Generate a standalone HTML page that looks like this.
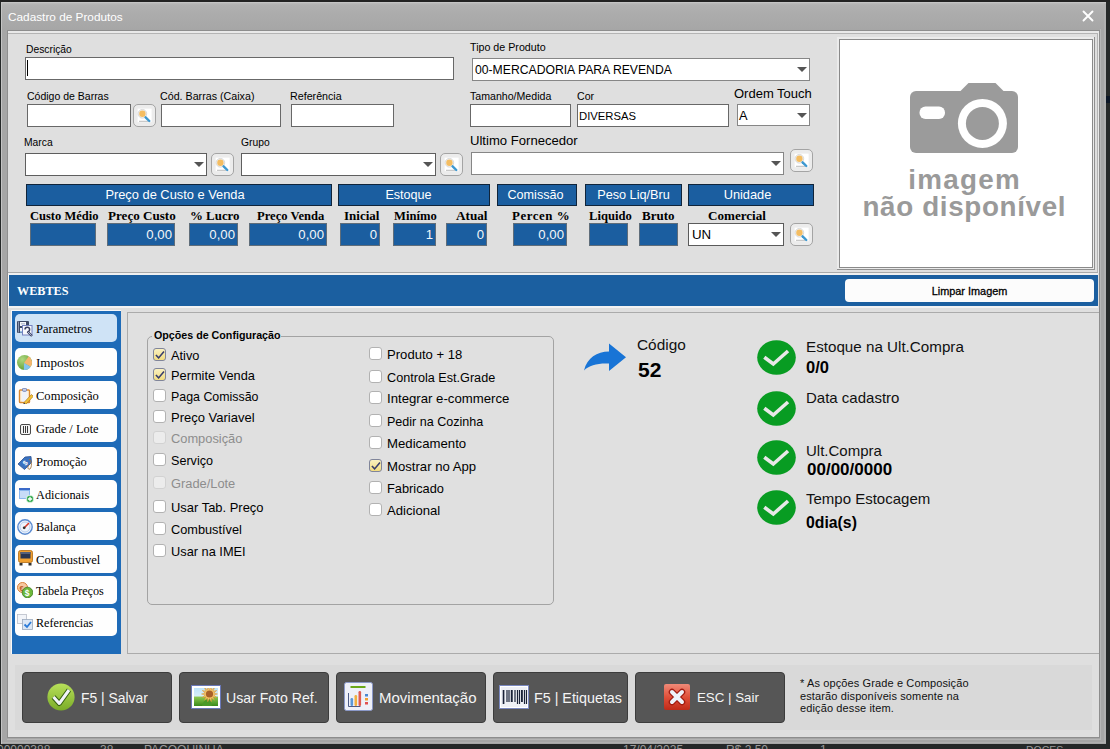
<!DOCTYPE html>
<html><head><meta charset="utf-8">
<style>
*{margin:0;padding:0;box-sizing:border-box}
html,body{width:1110px;height:749px;overflow:hidden;background:#252828;font-family:"Liberation Sans",sans-serif}
.a{position:absolute}
#win{position:absolute;left:1px;top:2px;width:1105px;height:742px;background:#a6a6a6;border-left:1px solid #c4c4c4;border-top:1px solid #c4c4c4}
#title{position:absolute;left:0;top:0;width:1104px;height:27px;background:linear-gradient(#bababa 0,#b1b1b1 2px,#acacac 40%,#a6a6a6 100%)}
#title span{position:absolute;left:6px;top:7px;font-size:11.8px;color:#fff;letter-spacing:0}
.lbl{position:absolute;font-size:11px;color:#000;white-space:nowrap;line-height:13px}
.inp{position:absolute;background:#fff;border:1px solid #686868}
.cmb{position:absolute;background:#fff;border:1px solid #868686}
.cmb:after{content:"";position:absolute;right:2px;top:50%;margin-top:-2.5px;border-left:5px solid transparent;border-right:5px solid transparent;border-top:5px solid #555}
.srch{position:absolute;width:23px;height:23px;border:1px solid #a4a4a4;border-radius:5px;background:#ececec}
.bar{position:absolute;height:22px;background:#1b5ea0;border:1px solid #10243a;color:#fff;font-size:13px;text-align:center;line-height:20px}
.bl{position:absolute;font-family:"Liberation Serif",serif;font-weight:bold;font-size:12.6px;white-space:nowrap;line-height:13px}
.bi{position:absolute;height:23px;background:#1b5ea0;border:1px solid #5f6d7a;color:#f4f6f8;font-size:13.2px;text-align:right;padding-right:2px;line-height:21px}

.cb{position:absolute;width:13px;height:13px;border:1px solid #b2b2b2;border-radius:3px;background:#fff}
.cb.ck{background:linear-gradient(#f9f0c0,#f2dc80);border-color:#80859a}

.cb.dis{background:#ececec;border-color:#d2d2d2}
.ct{position:absolute;font-size:12.6px;color:#000;white-space:nowrap;line-height:16px;margin-top:1px}
.ct.dt{color:#8d8d8d}
.sb{position:absolute;left:15px;width:102px;height:28px;background:#fefefe;border-radius:5px}
.sb.sel{background:#cfe3f6}
.sb span{position:absolute;left:21px;top:8px;font-family:"Liberation Serif",serif;font-size:12.6px;color:#000;white-space:nowrap;line-height:14px}
.ic{position:absolute;left:2px;top:6px;width:16px;height:16px}
.bbtn{position:absolute;top:672px;height:51px;background:#565656;border:1px solid #3c3c3c;border-radius:4px;color:#f4f4f4;white-space:nowrap}
.bbtn span{position:absolute;top:16px;font-size:14px;line-height:18px}
.st{position:absolute;font-size:15px;color:#111;white-space:nowrap;line-height:18px}
.sv{position:absolute;font-size:15px;font-weight:bold;color:#000;white-space:nowrap;line-height:18px}
</style></head><body>
<div id="win">
  <div id="title"><span>Cadastro de Produtos</span>
    <svg class="a" style="left:1080px;top:7px" width="12" height="12" viewBox="0 0 12 12"><path d="M1.5 1.5L10.5 10.5M10.5 1.5L1.5 10.5" stroke="#fff" stroke-width="1.9" stroke-linecap="round"/></svg>
  </div>
</div>
<div class="a" style="left:1106px;top:96px;width:4px;height:7px;background:#0c1626"></div>
<!-- frame stripes -->
<div class="a" style="left:1100px;top:29px;width:1px;height:710px;background:#b6b6b6"></div>
<div class="a" style="left:1104px;top:4px;width:2px;height:739px;background:#b0b0b0"></div>
<div class="a" style="left:7px;top:739px;width:1094px;height:1px;background:#b6b6b6"></div>
<div class="a" style="left:2px;top:742px;width:1104px;height:1px;background:#b0b0b0"></div>
<!-- content area -->
<div class="a" style="left:7px;top:30px;width:1093px;height:708px;background:#dfdfdf;border:1px solid #8e8e8e"></div><div class="a" style="left:1097px;top:33px;width:1px;height:240px;background:#b4b4b4"></div><div class="a" style="left:1098px;top:31px;width:1px;height:242px;background:#e9e9e9"></div>
<div class="a" style="left:8px;top:31px;width:1091px;height:2px;background:#e9e9e9"></div><div class="a" style="left:8px;top:33px;width:1090px;height:1px;background:#b4b4b4"></div><div class="a" style="left:0;top:0;width:1110px;height:2px;background:#222"></div>

<!-- row 1 -->
<div class="lbl" style="left:26px;top:43px;font-size:10.3px">Descrição</div>
<div class="inp" style="left:25px;top:57px;width:429px;height:23px"><div class="a" style="left:1px;top:2px;width:1px;height:16px;background:#000"></div></div>
<div class="lbl" style="left:470px;top:41px;font-size:10.7px">Tipo de Produto</div>
<div class="cmb" style="left:472px;top:58px;width:338px;height:23px"><span class="a" style="left:2px;top:4px;font-size:12.2px">00-MERCADORIA PARA REVENDA</span></div>

<!-- row 2 -->
<div class="lbl" style="left:27px;top:90px;font-size:10.5px">Código de Barras</div>
<div class="inp" style="left:27px;top:104px;width:104px;height:23px"></div>
<div class="srch" style="left:133px;top:104px"><svg class="a" style="left:0;top:0" width="21" height="21" viewBox="0 0 21 21"><rect x="3.6" y="3.6" width="14" height="13.6" fill="#fff"/><path d="M5 16.3H14.5" stroke="#b4b4b4" stroke-width="0.9"/><circle cx="8.4" cy="8.8" r="4.3" fill="#f3f3f3" stroke="#d8d8d8" stroke-width="1"/><circle cx="8.4" cy="8.8" r="3.2" fill="#f4bd62"/><path d="M11.6 12.3L15.3 16" stroke="#3d98d0" stroke-width="2.4" stroke-linecap="round"/></svg></div>
<div class="lbl" style="left:160px;top:90px;font-size:10.7px">Cód. Barras (Caixa)</div>
<div class="inp" style="left:161px;top:104px;width:120px;height:23px"></div>
<div class="lbl" style="left:290px;top:90px;font-size:10.7px">Referência</div>
<div class="inp" style="left:291px;top:104px;width:103px;height:23px"></div>
<div class="lbl" style="left:470px;top:90px;font-size:10.6px">Tamanho/Medida</div>
<div class="inp" style="left:470px;top:104px;width:101px;height:23px"></div>
<div class="lbl" style="left:577px;top:90px;font-size:10.6px">Cor</div>
<div class="inp" style="left:577px;top:104px;width:152px;height:23px"><span class="a" style="left:1px;top:5px;font-size:11.3px">DIVERSAS</span></div>
<div class="lbl" style="left:734px;top:87px;font-size:13px">Ordem Touch</div>
<div class="cmb" style="left:737px;top:104px;width:73px;height:22px"><span class="a" style="left:1px;top:3px;font-size:12.8px">A</span></div>

<!-- row 3 -->
<div class="lbl" style="left:24px;top:136px;font-size:10.3px">Marca</div>
<div class="cmb" style="left:25px;top:153px;width:182px;height:23px;border-color:#5e5e5e"></div>
<div class="srch" style="left:211px;top:153px"><svg class="a" style="left:0;top:0" width="21" height="21" viewBox="0 0 21 21"><rect x="3.6" y="3.6" width="14" height="13.6" fill="#fff"/><path d="M5 16.3H14.5" stroke="#b4b4b4" stroke-width="0.9"/><circle cx="8.4" cy="8.8" r="4.3" fill="#f3f3f3" stroke="#d8d8d8" stroke-width="1"/><circle cx="8.4" cy="8.8" r="3.2" fill="#f4bd62"/><path d="M11.6 12.3L15.3 16" stroke="#3d98d0" stroke-width="2.4" stroke-linecap="round"/></svg></div>
<div class="lbl" style="left:241px;top:136px;font-size:10.3px">Grupo</div>
<div class="cmb" style="left:241px;top:153px;width:195px;height:23px;border-color:#5e5e5e"></div>
<div class="srch" style="left:440px;top:153px"><svg class="a" style="left:0;top:0" width="21" height="21" viewBox="0 0 21 21"><rect x="3.6" y="3.6" width="14" height="13.6" fill="#fff"/><path d="M5 16.3H14.5" stroke="#b4b4b4" stroke-width="0.9"/><circle cx="8.4" cy="8.8" r="4.3" fill="#f3f3f3" stroke="#d8d8d8" stroke-width="1"/><circle cx="8.4" cy="8.8" r="3.2" fill="#f4bd62"/><path d="M11.6 12.3L15.3 16" stroke="#3d98d0" stroke-width="2.4" stroke-linecap="round"/></svg></div>
<div class="lbl" style="left:470px;top:134px;font-size:13.1px">Ultimo Fornecedor</div>
<div class="cmb" style="left:471px;top:152px;width:313px;height:23px"></div>
<div class="srch" style="left:790px;top:149px"><svg class="a" style="left:0;top:0" width="21" height="21" viewBox="0 0 21 21"><rect x="3.6" y="3.6" width="14" height="13.6" fill="#fff"/><path d="M5 16.3H14.5" stroke="#b4b4b4" stroke-width="0.9"/><circle cx="8.4" cy="8.8" r="4.3" fill="#f3f3f3" stroke="#d8d8d8" stroke-width="1"/><circle cx="8.4" cy="8.8" r="3.2" fill="#f4bd62"/><path d="M11.6 12.3L15.3 16" stroke="#3d98d0" stroke-width="2.4" stroke-linecap="round"/></svg></div>

<!-- blue bars -->
<div class="bar" style="left:26px;top:184px;width:306px;padding-right:8px;font-size:12.85px">Preço de Custo e Venda</div>
<div class="bar" style="left:338px;top:184px;width:152px;padding-right:11px;font-size:12.6px">Estoque</div>
<div class="bar" style="left:497px;top:184px;width:80px;padding-right:3px;font-size:12.6px">Comissão</div>
<div class="bar" style="left:585px;top:184px;width:97px;font-size:12.7px">Peso Liq/Bru</div>
<div class="bar" style="left:688px;top:184px;width:126px;padding-right:7px;font-size:12.8px">Unidade</div>

<div class="bl" style="left:30px;top:210px;font-size:12.5px">Custo Médio</div>
<div class="bl" style="left:108px;top:209px;font-size:13.1px">Preço Custo</div>
<div class="bl" style="left:190px;top:210px;font-size:12.9px">% Lucro</div>
<div class="bl" style="left:257px;top:210px;font-size:12.6px">Preço Venda</div>
<div class="bl" style="left:344px;top:209px;font-size:13px">Inicial</div>
<div class="bl" style="left:394px;top:210px;font-size:12.6px">Minímo</div>
<div class="bl" style="left:456px;top:209px;font-size:13.2px">Atual</div>
<div class="bl" style="left:512px;top:210px;font-size:12.9px;letter-spacing:0.55px">Percen %</div>
<div class="bl" style="left:589px;top:210px;font-size:12.6px">Liquido</div>
<div class="bl" style="left:642px;top:209px;font-size:13px">Bruto</div>
<div class="bl" style="left:708px;top:209px;font-size:13.1px">Comercial</div>

<div class="bi" style="left:30px;top:223px;width:66px"></div>
<div class="bi" style="left:107px;top:223px;width:68px">0,00</div>
<div class="bi" style="left:189px;top:223px;width:49px">0,00</div>
<div class="bi" style="left:249px;top:223px;width:78px">0,00</div>
<div class="bi" style="left:340px;top:223px;width:40px">0</div>
<div class="bi" style="left:393px;top:223px;width:43px">1</div>
<div class="bi" style="left:446px;top:223px;width:41px">0</div>
<div class="bi" style="left:513px;top:223px;width:54px">0,00</div>
<div class="bi" style="left:589px;top:223px;width:39px"></div>
<div class="bi" style="left:639px;top:223px;width:39px"></div>
<div class="cmb" style="left:688px;top:223px;width:96px;height:23px;border-color:#5a5a5a"><span class="a" style="left:3px;top:3px;font-size:13.3px">UN</span></div>
<div class="srch" style="left:790px;top:223px"><svg class="a" style="left:0;top:0" width="21" height="21" viewBox="0 0 21 21"><rect x="3.6" y="3.6" width="14" height="13.6" fill="#fff"/><path d="M5 16.3H14.5" stroke="#b4b4b4" stroke-width="0.9"/><circle cx="8.4" cy="8.8" r="4.3" fill="#f3f3f3" stroke="#d8d8d8" stroke-width="1"/><circle cx="8.4" cy="8.8" r="3.2" fill="#f4bd62"/><path d="M11.6 12.3L15.3 16" stroke="#3d98d0" stroke-width="2.4" stroke-linecap="round"/></svg></div>

<!-- image box -->
<div class="a" style="left:837px;top:37px;width:258px;height:233px;background:#ebebeb;border-right:1px solid #909090;border-bottom:1px solid #909090"></div>
<div class="a" style="left:839px;top:39px;width:254px;height:229px;background:#fff;border:1px solid #8a8a8a"></div>


<!-- camera placeholder -->
<svg class="a" style="left:900px;top:80px" width="130" height="80" viewBox="900 80 130 80">
 <path d="M960 91.5 L968.5 83 L995.5 83 L1004 91.5 Z" fill="#9b9b9b"/>
 <rect x="910" y="91" width="108" height="62" rx="6" fill="#9b9b9b"/>
 <rect x="919.5" y="106.5" width="25.5" height="12.5" rx="6" fill="#fff"/>
 <circle cx="982.4" cy="123.4" r="24.5" fill="#fff"/>
 <circle cx="982.4" cy="123.4" r="16.5" fill="#9b9b9b"/>
</svg>
<div class="a" style="left:836px;top:167px;width:256px;text-align:center;font-weight:bold;font-size:27.8px;line-height:26.7px;color:#9a9a9a;letter-spacing:0"><span style="letter-spacing:1.3px;margin-right:-1.3px">imagem</span><br><span style="letter-spacing:0.65px;margin-right:-0.65px">não disponível</span></div>

<!-- separator line & blue bar -->
<div class="a" style="left:8px;top:272px;width:1090px;height:1px;background:#a9a9a9"></div>
<div class="a" style="left:8px;top:273px;width:1090px;height:2px;background:#f0f0f0"></div>
<div class="a" style="left:8px;top:275px;width:1090px;height:31px;background:#1b5fa0;border-left:1px solid #fafafa"></div>
<div class="a" style="left:17px;top:284px;font-family:'Liberation Serif',serif;font-weight:bold;font-size:12.2px;color:#fff;line-height:14px">WEBTES</div>
<div class="a" style="left:845px;top:279px;width:249px;height:23px;background:#fcfcfc;border-radius:4px;text-align:center;font-size:10.9px;line-height:25px;color:#000;-webkit-text-stroke:0.3px #000">Limpar Imagem</div>
<div class="a" style="left:8px;top:306px;width:1090px;height:2px;background:#f2f2f2"></div>

<!-- sidebar -->
<div class="a" style="left:11px;top:310px;width:110px;height:344px;background:#1e6bb8;border-left:1px solid #f8f8f8;border-top:1px solid #f8f8f8"></div>
<div class="sb sel" style="top:314px"><svg class="a" style="left:2px;top:7px" width="16" height="16" viewBox="0 0 16 16"><rect x="0" y="0" width="12" height="12" fill="#3e4a66" rx="1"/><rect x="1" y="0.5" width="1" height="11" fill="#8a96b0"/><rect x="3" y="1" width="6" height="4" fill="#f4f6fa"/><rect x="4" y="2" width="4" height="1.5" fill="#c0c8d8"/><rect x="3" y="7" width="7" height="4.5" fill="#f0f2f8"/><rect x="3" y="10.5" width="7" height="1" fill="#4a90d0"/><rect x="5.5" y="4.5" width="9.5" height="9.5" fill="#f6f8fc" stroke="#7482c0" stroke-width="1"/><path d="M8 8.5 A2.3 2.3 0 1 1 10.5 10.8" stroke="#3a4060" stroke-width="1.5" fill="none"/><path d="M10.5 10.5L15 15" stroke="#3a4060" stroke-width="2.2"/><path d="M10.8 10.8L14.6 14.6" stroke="#b8c4e0" stroke-width="0.9"/></svg><span style="font-size:12.5px">Parametros</span></div>
<div class="sb" style="top:348px"><svg class="a" style="left:2px;top:7px" width="16" height="16" viewBox="0 0 16 16"><defs><radialGradient id="pg" cx="0.35" cy="0.3" r="0.8"><stop offset="0" stop-color="#b0d880"/><stop offset="1" stop-color="#5a9a30"/></radialGradient></defs><circle cx="7.5" cy="7.5" r="7.5" fill="url(#pg)"/><path d="M7 8 L11.80 1.36 A7.5 7.5 0 0 1 13.64 11.80 Z" fill="#f5b56e"/><path d="M7 8 L13.64 11.80 A7.5 7.5 0 0 1 6.85 14.97 Z" fill="#86c4ee"/></svg><span style="font-size:13.1px">Impostos</span></div>
<div class="sb" style="top:381px"><svg class="a" style="left:2px;top:7px" width="16" height="16" viewBox="0 0 16 16"><rect x="2.5" y="2" width="10" height="12.5" fill="#fdf2e0" stroke="#dc8a30" stroke-width="1.4" rx="0.8"/><rect x="5" y="2.5" width="5" height="11" fill="#eef2fa"/><rect x="5.5" y="0.3" width="4" height="3" fill="#c8d0e8" stroke="#6070a8" stroke-width="0.8" rx="1"/><path d="M7 14.5 L14.5 6.5 L16.3 8.3 L8.8 16.3 L6.5 16.8 Z" fill="#f4c438" stroke="#b07818" stroke-width="0.7"/><path d="M6.5 16.8L7 14.5L8.8 16.3Z" fill="#2a3060"/></svg><span style="font-size:12.55px">Composição</span></div>
<div class="sb" style="top:414px"><svg class="a" style="left:5px;top:10px" width="11" height="11" viewBox="0 0 11 11"><rect x="0.5" y="0.5" width="10" height="10" fill="#f4f4f4" stroke="#4a4a4a" stroke-width="1" rx="1.5"/><path d="M3.5 2V9M5.5 2V9M7.5 2V9" stroke="#3a3a3a" stroke-width="1" shape-rendering="crispEdges"/></svg><span style="font-size:12.4px">Grade / Lote</span></div>
<div class="sb" style="top:447px"><svg class="a" style="left:2px;top:8px" width="16" height="16" viewBox="0 0 16 16"><path d="M1 9 L8 2 L14 1.5 L14.5 7.5 L7.5 14.5 Z" fill="#3a72c0" stroke="#2a5090" stroke-width="0.8"/><text x="6.5" y="11" font-size="7" fill="#fff" font-weight="bold" transform="rotate(-45 7.5 8.5)" font-family="Liberation Sans">$</text><path d="M12 4 C15 6 15 12 13 14 C11 15 10 12 12 10" stroke="#a0703a" stroke-width="0.9" fill="none"/></svg><span style="font-size:12.5px">Promoção</span></div>
<div class="sb" style="top:480px"><svg class="a" style="left:3px;top:7px" width="16" height="16" viewBox="0 0 16 16"><rect x="1" y="1" width="11" height="11" fill="#8ab6ee"/><rect x="1" y="1" width="11" height="2" fill="#3a6ac8"/><rect x="2" y="4" width="9" height="7" fill="#c8dcf8"/><circle cx="12" cy="12" r="3.8" fill="#2ea84a" stroke="#fff" stroke-width="0.8"/><path d="M12 9.8V14.2M9.8 12H14.2" stroke="#fff" stroke-width="1.3"/></svg><span style="font-size:12.3px">Adicionais</span></div>
<div class="sb" style="top:512px"><svg class="a" style="left:2px;top:7px" width="16" height="16" viewBox="0 0 16 16"><circle cx="8" cy="8" r="7.2" fill="#eef4fc" stroke="#5a8ad0" stroke-width="1.4"/><circle cx="8" cy="8" r="5" fill="none" stroke="#a8c4ea" stroke-width="0.8"/><path d="M7 9 L12 4" stroke="#d83a2a" stroke-width="1.6"/><circle cx="7.2" cy="8.8" r="1.4" fill="#333"/></svg><span style="font-size:12.35px">Balança</span></div>
<div class="sb" style="top:545px"><svg class="a" style="left:3px;top:5px" width="16" height="16" viewBox="0 0 16 16"><rect x="0.5" y="0.5" width="14" height="12" rx="2" fill="#f0a030" stroke="#b06a10" stroke-width="0.8"/><rect x="2.5" y="2" width="10" height="6.5" fill="#2a3550"/><rect x="2.5" y="2" width="10" height="2" fill="#55607a"/><rect x="1.5" y="13" width="3" height="2.5" fill="#333"/><rect x="10.5" y="13" width="3" height="2.5" fill="#333"/></svg><span style="font-size:12.6px">Combustivel</span></div>
<div class="sb" style="top:576px"><svg class="a" style="left:2px;top:6px" width="16" height="16" viewBox="0 0 16 16"><circle cx="5.5" cy="5.5" r="5" fill="#f8c8a0" stroke="#d8803a" stroke-width="1"/><text x="2.5" y="8.5" font-size="7.5" fill="#c0602a" font-family="Liberation Sans" font-weight="bold">€</text><circle cx="10.5" cy="10.5" r="5.3" fill="#6cb83a" stroke="#3a7a1a" stroke-width="0.8"/><text x="7.8" y="14.2" font-size="8.5" fill="#fff" font-family="Liberation Sans" font-weight="bold">$</text></svg><span style="font-size:12.2px">Tabela Preços</span></div>
<div class="sb" style="top:608px"><svg class="a" style="left:2px;top:6px" width="16" height="16" viewBox="0 0 16 16"><rect x="0.5" y="0.5" width="9" height="9" fill="#f2f4f8" stroke="#b8bec8" stroke-width="0.8"/><rect x="5.5" y="5.5" width="10" height="10" fill="#dbe6f4" stroke="#9aa8bc" stroke-width="0.8"/><path d="M7.5 10.5 L10 13 L14 8" stroke="#2a7ad8" stroke-width="1.8" fill="none"/></svg><span style="font-size:12.15px">Referencias</span></div>

<!-- tab content panel -->
<div class="a" style="left:127px;top:312px;width:972px;height:342px;background:#e0e0e0;border-left:1px solid #ababab;border-top:1px solid #ababab;border-bottom:1px solid #ababab"></div>
<div class="a" style="left:147px;top:336px;width:407px;height:269px;border:1px solid #a3a3a3;border-radius:5px"></div>
<div class="a" style="left:152px;top:329px;padding:0 0 0 2px;background:#e0e0e0;font-weight:bold;font-size:10.7px;line-height:12px;color:#000;white-space:nowrap">Opções de Configuração</div>
<div class="cb ck" style="left:153px;top:348px"><svg class="a" style="left:-1px;top:-1px" width="14" height="14" viewBox="0 0 14 14"><path d="M2.9 7L5.6 9.9L11 3.4" stroke="#383d6c" stroke-width="1.6" fill="none" stroke-linejoin="miter"/></svg></div><div class="ct" style="left:171px;top:347px;font-size:12.8px">Ativo</div>
<div class="cb ck" style="left:153px;top:368px"><svg class="a" style="left:-1px;top:-1px" width="14" height="14" viewBox="0 0 14 14"><path d="M2.9 7L5.6 9.9L11 3.4" stroke="#383d6c" stroke-width="1.6" fill="none" stroke-linejoin="miter"/></svg></div><div class="ct" style="left:171px;top:367px;font-size:12.8px">Permite Venda</div>
<div class="cb" style="left:153px;top:389px"></div><div class="ct" style="left:171px;top:388px;font-size:12.4px">Paga Comissão</div>
<div class="cb" style="left:153px;top:410px"></div><div class="ct" style="left:171px;top:409px;font-size:13.0px">Preço Variavel</div>
<div class="cb dis" style="left:153px;top:431px"></div><div class="ct dt" style="left:171px;top:430px;font-size:12.85px">Composição</div>
<div class="cb" style="left:153px;top:453px"></div><div class="ct" style="left:171px;top:452px;font-size:12.6px">Serviço</div>
<div class="cb dis" style="left:153px;top:476px"></div><div class="ct dt" style="left:171px;top:475px;font-size:12.85px">Grade/Lote</div>
<div class="cb" style="left:153px;top:500px"></div><div class="ct" style="left:171px;top:499px;font-size:12.95px">Usar Tab. Preço</div>
<div class="cb" style="left:153px;top:522px"></div><div class="ct" style="left:171px;top:521px;font-size:12.75px">Combustível</div>
<div class="cb" style="left:153px;top:544px"></div><div class="ct" style="left:171px;top:543px;font-size:12.8px">Usar na IMEI</div>
<div class="cb" style="left:369px;top:347px"></div><div class="ct" style="left:387px;top:346px;font-size:13.1px">Produto + 18</div>
<div class="cb" style="left:369px;top:370px"></div><div class="ct" style="left:387px;top:369px;font-size:12.65px">Controla Est.Grade</div>
<div class="cb" style="left:369px;top:391px"></div><div class="ct" style="left:387px;top:390px;font-size:13.2px">Integrar e-commerce</div>
<div class="cb" style="left:369px;top:414px"></div><div class="ct" style="left:387px;top:413px;font-size:12.55px">Pedir na Cozinha</div>
<div class="cb" style="left:369px;top:436px"></div><div class="ct" style="left:387px;top:435px;font-size:13.2px">Medicamento</div>
<div class="cb ck" style="left:369px;top:459px"><svg class="a" style="left:-1px;top:-1px" width="14" height="14" viewBox="0 0 14 14"><path d="M2.9 7L5.6 9.9L11 3.4" stroke="#383d6c" stroke-width="1.6" fill="none" stroke-linejoin="miter"/></svg></div><div class="ct" style="left:387px;top:458px;font-size:13.15px">Mostrar no App</div>
<div class="cb" style="left:369px;top:481px"></div><div class="ct" style="left:387px;top:480px;font-size:12.8px">Fabricado</div>
<div class="cb" style="left:369px;top:503px"></div><div class="ct" style="left:387px;top:502px;font-size:13.1px">Adicional</div>

<!-- status -->
<svg class="a" style="left:582px;top:342px" width="46" height="31" viewBox="582 342 46 31">
 <path d="M584 370.5 C587 358 597 351.5 609 351.5 L609 343.5 L626 357.2 L609 371 L609 363.5 C598 363 589 365 584 370.5 Z" fill="#1874d6"/>
</svg>
<div class="st" style="left:637px;top:336px;font-size:15.4px">Código</div>
<div class="sv" style="left:638px;top:359px;font-size:21px;line-height:22px">52</div>
<svg class="a" style="left:757px;top:340px" width="39" height="35" viewBox="0 0 39 35"><ellipse cx="19.5" cy="17.5" rx="19.3" ry="17.2" fill="#089c22"/><path d="M7.3 17.2 L16.3 24 L31 11" stroke="#e8e8e8" stroke-width="3.6" fill="none"/></svg>
<div class="st" style="left:806px;top:338px;font-size:15.2px">Estoque na Ult.Compra</div>
<div class="sv" style="left:806px;top:358px;font-size:16.5px">0/0</div>
<svg class="a" style="left:757px;top:390.5px" width="39" height="35" viewBox="0 0 39 35"><ellipse cx="19.5" cy="17.5" rx="19.3" ry="17.2" fill="#089c22"/><path d="M7.3 17.2 L16.3 24 L31 11" stroke="#e8e8e8" stroke-width="3.6" fill="none"/></svg>
<div class="st" style="left:806px;top:389px">Data cadastro</div>
<svg class="a" style="left:757px;top:439.5px" width="39" height="35" viewBox="0 0 39 35"><ellipse cx="19.5" cy="17.5" rx="19.3" ry="17.2" fill="#089c22"/><path d="M7.3 17.2 L16.3 24 L31 11" stroke="#e8e8e8" stroke-width="3.6" fill="none"/></svg>
<div class="st" style="left:806px;top:442px">Ult.Compra</div>
<div class="sv" style="left:807px;top:461px;font-size:17px">00/00/0000</div>
<svg class="a" style="left:757px;top:489.5px" width="39" height="35" viewBox="0 0 39 35"><ellipse cx="19.5" cy="17.5" rx="19.3" ry="17.2" fill="#089c22"/><path d="M7.3 17.2 L16.3 24 L31 11" stroke="#e8e8e8" stroke-width="3.6" fill="none"/></svg>
<div class="st" style="left:806px;top:490px">Tempo Estocagem</div>
<div class="sv" style="left:806px;top:514px;font-size:15.8px">0dia(s)</div>

<!-- bottom panel -->
<div class="a" style="left:15px;top:665px;width:1077px;height:65px;background:#d9d9d9"></div>
<div class="bbtn" style="left:22px;width:150px"><svg class="a" style="left:24px;top:10px" width="28" height="28" viewBox="0 0 28 28"><defs><linearGradient id="gg" x1="0" y1="0" x2="0" y2="1"><stop offset="0" stop-color="#b8e05a"/><stop offset="1" stop-color="#7aac28"/></linearGradient></defs><circle cx="14" cy="14" r="13.6" fill="url(#gg)"/><path d="M6.5 14 L12.3 20.5 L22 7" stroke="#356010" stroke-width="5" fill="none" stroke-linejoin="round"/><path d="M6.5 14 L12.3 20.5 L22 7" stroke="#f2f4fa" stroke-width="3" fill="none" stroke-linejoin="round"/></svg><span style="left:58px;font-size:13.9px">F5 | Salvar</span></div>
<div class="bbtn" style="left:179px;width:150px"><svg class="a" style="left:11px;top:12px" width="30" height="24" viewBox="0 0 30 24"><rect x="0.5" y="0.5" width="29" height="23" fill="#fff" stroke="#6a78b8" stroke-width="1"/><defs><linearGradient id="sky" x1="0" y1="0" x2="0" y2="1"><stop offset="0" stop-color="#bfe4fa"/><stop offset="0.45" stop-color="#d8eef8"/><stop offset="0.5" stop-color="#8cc850"/><stop offset="1" stop-color="#3a8a1a"/></linearGradient></defs><rect x="3" y="3" width="24" height="18" fill="url(#sky)"/><clipPath id="pc"><rect x="3" y="3" width="24" height="18"/></clipPath><g clip-path="url(#pc)"><path d="M11 21 C12 15 16 14 19 14 L21 21Z" fill="#4a9a2a"/><polygon points="26.5,9.0 22.9,10.0 25.7,12.5 22.0,11.8 23.5,15.3 20.5,13.1 20.3,16.8 18.5,13.5 16.7,16.8 16.5,13.1 13.5,15.3 15.0,11.8 11.3,12.5 14.1,10.0 10.5,9.0 14.1,8.0 11.3,5.5 15.0,6.2 13.5,2.7 16.5,4.9 16.7,1.2 18.5,4.5 20.3,1.2 20.5,4.9 23.5,2.7 22.0,6.2 25.7,5.5 22.9,8.0" fill="#f4c468" stroke="#d89030" stroke-width="0.5"/><circle cx="18.5" cy="9" r="3.6" fill="#a8602a"/></g></svg><span style="left:46px;font-size:14.1px">Usar Foto Ref.</span></div>
<div class="bbtn" style="left:336px;width:150px"><svg class="a" style="left:7px;top:9px" width="29" height="29" viewBox="0 0 29 29"><rect x="0.5" y="0.5" width="28" height="28" rx="2" fill="#eef0f8" stroke="#8a98c8"/><rect x="6.5" y="4" width="15" height="2" fill="#6aa81a"/><path d="M4.5 11V24.5H16.5" stroke="#3a4a78" stroke-width="0.9" fill="none"/><rect x="6.5" y="16" width="2.6" height="8" rx="1.2" fill="#5a98d8"/><rect x="10.5" y="13" width="2.6" height="11" rx="1.2" fill="#f0b040"/><rect x="14.5" y="9" width="2.6" height="15" rx="1.2" fill="#e05a50"/><rect x="21" y="12" width="3" height="2.5" fill="#4a88d0"/><rect x="21" y="16" width="3" height="2.5" fill="#f0a030"/><rect x="21" y="20" width="3" height="2.5" fill="#e05050"/></svg><span style="left:42px;font-size:15px">Movimentação</span></div>
<div class="bbtn" style="left:493px;width:135px"><svg class="a" style="left:5px;top:12px" width="30" height="24" viewBox="0 0 30 24"><rect x="0.5" y="0.5" width="29" height="23" fill="#fff" stroke="#7a88c0"/><rect x="2" y="2" width="26" height="20" fill="#eef0f6"/><path d="M4.5 5V19M8 5V17M10 5V17M13 5V17M16 5V17M18.5 5V19M20.5 5V19M23 5V17M25.5 5V19M27.5 5V19" stroke="#1a2238" stroke-width="1.2"/><rect x="3.8" y="5" width="1.5" height="14" fill="#1a2238"/><rect x="11.8" y="5" width="1.5" height="12" fill="#1a2238"/><rect x="22" y="5" width="1.6" height="12" fill="#1a2238"/></svg><span style="left:40px;font-size:14.3px">F5 | Etiquetas</span></div>
<div class="bbtn" style="left:635px;width:150px"><svg class="a" style="left:28px;top:11px" width="26" height="26" viewBox="0 0 26 26"><defs><linearGradient id="rg" x1="0" y1="0" x2="0" y2="1"><stop offset="0" stop-color="#f08a78"/><stop offset="0.5" stop-color="#e0503a"/><stop offset="1" stop-color="#c02a18"/></linearGradient></defs><rect x="0" y="0" width="26" height="26" rx="2" fill="url(#rg)"/><path d="M8 8L18 18M18 8L8 18" stroke="#a01a10" stroke-width="6.5" stroke-linecap="round"/><path d="M8 8L18 18M18 8L8 18" stroke="#eef2fa" stroke-width="4" stroke-linecap="round"/></svg><span style="left:61px;font-size:13.3px">ESC | Sair</span></div>
<div class="a" style="left:800px;top:677px;font-size:11px;line-height:12.5px;color:#111;white-space:nowrap;letter-spacing:0.12px">* As opções Grade e Composição<br>estarão disponíveis somente na<br>edição desse item.</div>

<!-- background list strip -->
<div class="a" style="left:0;top:744px;width:1110px;height:5px;overflow:hidden">
 <div class="a" style="left:0;top:0;font-size:12px;color:#9a9a9a;white-space:nowrap;line-height:12px;top:-1px">
  <span class="a" style="left:-3px;top:1px">00000388</span><span class="a" style="left:100px;top:1px">38</span><span class="a" style="left:144px;top:1px">PACOQUINHA</span><span class="a" style="left:623px;top:1px">17/04/2025</span><span class="a" style="left:726px;top:1px">R$ 2,50</span><span class="a" style="left:816px;top:1px">-1</span><span class="a" style="left:1026px;top:1px;font-size:10.5px">DOCES</span>
 </div>
</div>
</body></html>
